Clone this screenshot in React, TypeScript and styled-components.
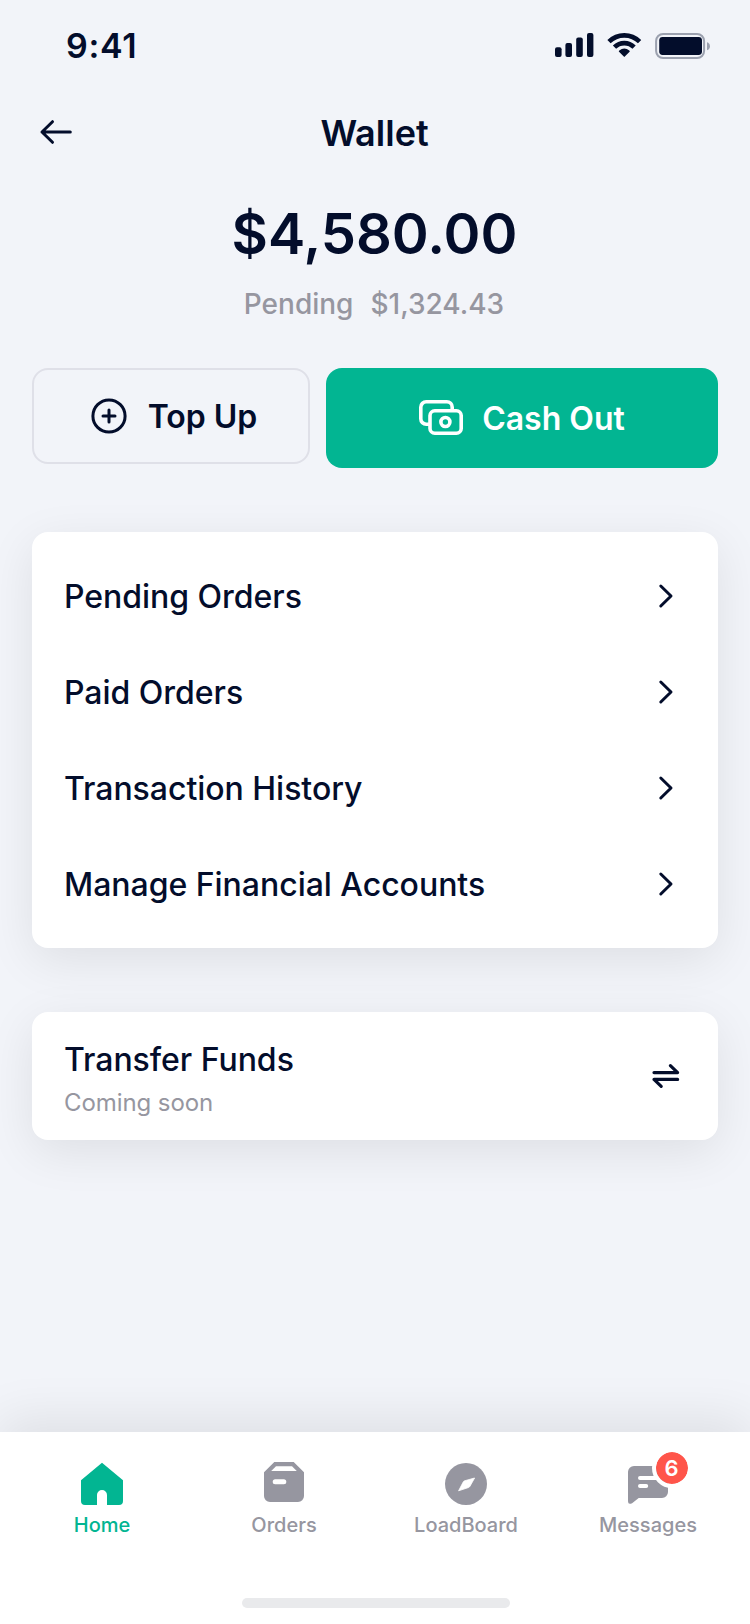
import React from "react";
import styled, { createGlobalStyle } from "styled-components";

const ink = "#030d2b";
const grey = "#9696a0";
const green = "#02b592";

const GlobalStyle = createGlobalStyle`
  *, *::before, *::after { box-sizing: border-box; }
  body {
    margin: 0;
    background: #f2f4f9;
    font-family: Inter, "Liberation Sans", sans-serif;
    color: ${ink};
  }
  button { font: inherit; color: inherit; border: 0; background: none; padding: 0; }
  svg { display: block; flex: none; }
`;

const Screen = styled.div`
  width: 750px;
  height: 1624px;
  display: flex;
  flex-direction: column;
  overflow: hidden;
  background: #f2f4f9;
`;

const StatusBar = styled.div`
  height: 92px;
  padding: 0 38px 0 66px;
  display: flex;
  justify-content: space-between;
  align-items: center;
`;

const Clock = styled.span`
  font-size: 34px;
  line-height: 40px;
  font-weight: 600;
  letter-spacing: 0.7px;
`;

const Header = styled.header`
  height: 80px;
  padding: 0 32px;
  display: grid;
  grid-template-columns: 48px 1fr 48px;
  align-items: center;
`;

const Title = styled.h1`
  margin: 2px 0 0;
  padding-right: 1px;
  text-align: center;
  font-size: 36px;
  line-height: 44px;
  font-weight: 600;
`;

const Balance = styled.section`
  height: 196px;
  padding: 28px 1px 0 0;
  display: flex;
  flex-direction: column;
  align-items: center;
`;

const Amount = styled.div`
  font-size: 56px;
  line-height: 68px;
  font-weight: 600;
`;

const Pending = styled.div`
  margin-top: 18px;
  padding-right: 1px;
  display: flex;
  gap: 17px;
  font-size: 28px;
  line-height: 36px;
  font-weight: 500;
  color: ${grey};
`;

const Actions = styled.div`
  padding: 0 32px;
  display: flex;
  align-items: flex-start;
  gap: 16px;
`;

const ActionButton = styled.button<{ $primary?: boolean }>`
  flex: ${(p) => (p.$primary ? "1" : "0 0 278px")};
  height: ${(p) => (p.$primary ? 100 : 96)}px;
  padding-left: ${(p) => (p.$primary ? 0 : 6)}px;
  display: flex;
  align-items: center;
  justify-content: center;
  gap: ${(p) => (p.$primary ? 19 : 21)}px;
  border-radius: 16px;
  border: ${(p) => (p.$primary ? "0" : "2px solid #dfe0e8")};
  background: ${(p) => (p.$primary ? green : "transparent")};
  color: ${(p) => (p.$primary ? "#fff" : ink)};
  font-size: 32px;
  line-height: 40px;
  font-weight: 600;
`;

const ActionLabel = styled.span`
  padding-top: 2px;
`;

const Card = styled.section<{ $pad: string }>`
  margin: 64px 32px 0;
  padding: ${(p) => p.$pad};
  border-radius: 16px;
  background: #fff;
  box-shadow: 0 12px 48px rgba(0, 0, 0, 0.085);
`;

const Row = styled.div`
  height: 96px;
  display: flex;
  align-items: center;
  justify-content: space-between;
  padding-right: 8px;
`;

const RowLabel = styled.span`
  padding-top: 2px;
  font-size: 32px;
  line-height: 40px;
  font-weight: 500;
  letter-spacing: -0.03px;
`;

const RowText = styled.div`
  padding-top: 5px;
  display: flex;
  flex-direction: column;
  gap: 7px;
`;

const RowNote = styled.span`
  font-size: 24px;
  line-height: 32px;
  letter-spacing: -0.08px;
  color: ${grey};
`;

const TabBar = styled.nav`
  height: 192px;
  margin-top: auto;
  padding: 28px 11px 16px;
  display: flex;
  flex-direction: column;
  justify-content: space-between;
  align-items: center;
  background: #fff;
  box-shadow: 0 -12px 48px rgba(0, 0, 0, 0.085);
`;

const Tabs = styled.div`
  align-self: stretch;
  display: grid;
  grid-template-columns: repeat(4, 1fr);
`;

const Tab = styled.button<{ $active?: boolean }>`
  display: flex;
  flex-direction: column;
  align-items: center;
  gap: 5px;
  font-size: 20px;
  line-height: 24px;
  font-weight: 500;
  color: ${(p) => (p.$active ? green : grey)};
`;

const IconBox = styled.span`
  position: relative;
  width: 48px;
  height: 48px;
`;

const Badge = styled.span`
  position: absolute;
  left: 28px;
  top: -12px;
  width: 40px;
  height: 40px;
  padding-right: 1px;
  border: 4px solid #fff;
  border-radius: 50%;
  background: #ff554a;
  background-clip: padding-box;
  color: #fff;
  font-size: 22px;
  line-height: 32px;
  font-weight: 600;
  text-align: center;
`;

const HomeIndicator = styled.div`
  width: 268px;
  height: 10px;
  margin-left: 2px;
  border-radius: 5px;
  background: #e9eaec;
`;

const StatusIcons = () => (
  <svg width="158" height="32" viewBox="554 30 158 32" fill={ink}>
    <rect x="555" y="47.3" width="6.6" height="9.7" rx="2" />
    <rect x="565.4" y="43" width="6.6" height="14" rx="2" />
    <rect x="576.2" y="37.4" width="6.6" height="19.6" rx="2" />
    <rect x="587" y="33" width="6.4" height="24" rx="2" />
    <g fill="none" stroke={ink}>
      <path d="M609 41.7a21.7 21.7 0 0 1 30.6 0" strokeWidth="4.6" />
      <path d="M614.5 47.2a13.9 13.9 0 0 1 19.6 0" strokeWidth="4.6" />
    </g>
    <path d="M624.3 57l-5.3-5.2q-.6-.8.3-1.4a8.6 8.6 0 0 1 10 0q.9.6.3 1.4z" />
    <rect x="656.1" y="34" width="48" height="24" rx="7" fill="none" stroke={ink} strokeOpacity=".36" strokeWidth="2" />
    <rect x="659.2" y="37" width="42.8" height="18" rx="3.4" />
    <path d="M707 42.3a4.2 4.2 0 0 1 0 8z" fillOpacity=".36" />
  </svg>
);

const BackIcon = () => (
  <svg width="48" height="48" viewBox="0 0 48 48" fill="none" stroke={ink} strokeWidth="3" strokeLinecap="round" strokeLinejoin="round">
    <path d="M38.3 24H10M20.5 13.7L10 24l10.5 10.3" />
  </svg>
);

const PlusIcon = () => (
  <svg width="36" height="36" viewBox="0 0 36 36" fill="none" stroke="currentColor" strokeWidth="3" strokeLinecap="round">
    <circle cx="18" cy="18" r="16.1" />
    <path d="M18 12v12M12 18h12" />
  </svg>
);

const CashIcon = () => (
  <svg width="44" height="36" viewBox="0 0 44 36" fill="none" stroke="currentColor" strokeWidth="3.6">
    <path d="M10.5 24.2H7.2a5.4 5.4 0 0 1-5.4-5.4V7.2a5.4 5.4 0 0 1 5.4-5.4h20.6a5.4 5.4 0 0 1 5.4 5.4v3" />
    <rect x="11" y="10.8" width="31.2" height="22.4" rx="4.8" />
    <circle cx="26.4" cy="22" r="4.5" />
  </svg>
);

const ChevronIcon = () => (
  <svg width="24" height="32" viewBox="0 0 24 32" fill="none" stroke={ink} strokeWidth="3" strokeLinecap="round" strokeLinejoin="round">
    <path d="M6.8 6L17 16 6.8 26" />
  </svg>
);

const TransferIcon = () => (
  <svg width="28" height="32" viewBox="4 0 28 32" fill="none" stroke={ink} strokeWidth="3.2" strokeLinecap="round" strokeLinejoin="round">
    <path d="M6 12.6h23.6L22.4 5.6M29.6 19.4H6l7.2 7" />
  </svg>
);

const HomeIcon = () => (
  <svg width="48" height="48" viewBox="0 0 48 48" fill="currentColor">
    <path d="M24 2.8L45 20.3V41a4 4 0 0 1-4 4H29V35a5 5 0 0 0-10 0v10H7a4 4 0 0 1-4-4V20.3z" />
  </svg>
);

const OrdersIcon = () => (
  <svg width="48" height="48" viewBox="0 0 48 48" fill="currentColor" fillRule="evenodd">
    <path d="M14.3 2h19.4L44 12.3V36a6 6 0 0 1-6 6H10a6 6 0 0 1-6-6V12.3zM16 6.2L11.2 10.9h25.6L32 6.2zM15.2 19.3a2.5 2.5 0 0 0 0 5h8.6a2.5 2.5 0 0 0 0-5z" />
  </svg>
);

const CompassIcon = () => (
  <svg width="48" height="48" viewBox="0 0 48 48">
    <circle cx="24" cy="24" r="21" fill="currentColor" />
    <path d="M32.6 18L28 26.2q-.5.9-1.4 1.3L16.6 30.8 21.2 22q.5-.9 1.4-1.2z" fill="#fff" stroke="#fff" strokeWidth=".8" strokeLinejoin="round" />
  </svg>
);

const MessageIcon = () => (
  <svg width="48" height="48" viewBox="0 0 48 48">
    <path d="M10 6h28a6 6 0 0 1 6 6v20a6 6 0 0 1-6 6H14.7l-6.6 5.2Q4 45.2 4 41.2V12a6 6 0 0 1 6-6z" fill="currentColor" />
    <path d="M16 18h18M16 26h6.2" stroke="#fff" strokeWidth="4" strokeLinecap="round" />
  </svg>
);

const menu = ["Pending Orders", "Paid Orders", "Transaction History", "Manage Financial Accounts"];

const tabs = [
  { label: "Home", Icon: HomeIcon, active: true },
  { label: "Orders", Icon: OrdersIcon },
  { label: "LoadBoard", Icon: CompassIcon },
  { label: "Messages", Icon: MessageIcon, badge: 6 },
];

export default function App() {
  return (
    <Screen>
      <GlobalStyle />
      <StatusBar>
        <Clock>9:41</Clock>
        <StatusIcons />
      </StatusBar>
      <Header>
        <BackIcon />
        <Title>Wallet</Title>
      </Header>
      <Balance>
        <Amount>$4,580.00</Amount>
        <Pending>
          <span>Pending</span>
          <span>$1,324.43</span>
        </Pending>
      </Balance>
      <Actions>
        <ActionButton>
          <PlusIcon />
          <ActionLabel>Top Up</ActionLabel>
        </ActionButton>
        <ActionButton $primary>
          <CashIcon />
          <ActionLabel>Cash Out</ActionLabel>
        </ActionButton>
      </Actions>
      <Card $pad="16px 32px">
        {menu.map((label) => (
          <Row key={label}>
            <RowLabel>{label}</RowLabel>
            <ChevronIcon />
          </Row>
        ))}
      </Card>
      <Card $pad="16px 30px 16px 32px">
        <Row>
          <RowText>
            <RowLabel>Transfer Funds</RowLabel>
            <RowNote>Coming soon</RowNote>
          </RowText>
          <TransferIcon />
        </Row>
      </Card>
      <TabBar>
        <Tabs>
          {tabs.map(({ label, Icon, active, badge }) => (
            <Tab key={label} $active={active}>
              <IconBox>
                <Icon />
                {badge && <Badge>{badge}</Badge>}
              </IconBox>
              {label}
            </Tab>
          ))}
        </Tabs>
        <HomeIndicator />
      </TabBar>
    </Screen>
  );
}
